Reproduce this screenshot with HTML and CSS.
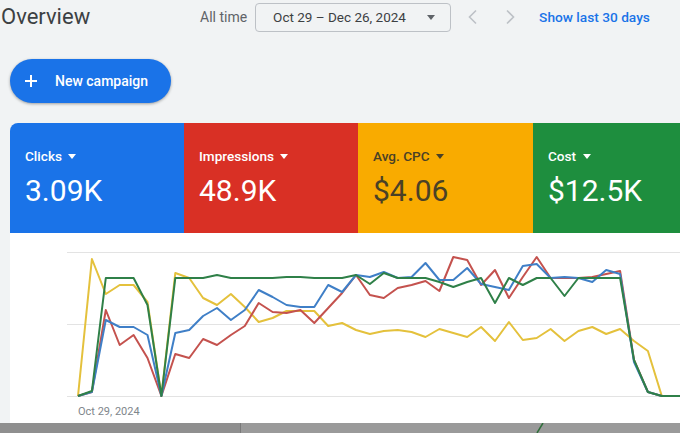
FILE: index.html
```html
<!DOCTYPE html>
<html>
<head>
<meta charset="UTF-8">
<meta name="viewport" content="width=device-width, initial-scale=1">
<link rel="stylesheet" href="styles.css">
</head>
<body>

<div class="topbar">
	<h2 class="title">Overview</h2>
	<span class="range-label">All time</span>
	<div class="date-box">
		<span>Oct 29 &ndash; Dec 26, 2024</span>
		<span class="caret"></span>
	</div>
	<button class="nav-btn" title="Previous period">
		<svg width="12" height="16" viewBox="0 0 12 16"><polyline points="9,1.5 2.5,8 9,14.5" fill="none" stroke="#bdc1c6" stroke-width="1.6"/></svg>
	</button>
	<button class="nav-btn" title="Next period">
		<svg width="12" height="16" viewBox="0 0 12 16"><polyline points="3,1.5 9.5,8 3,14.5" fill="none" stroke="#bdc1c6" stroke-width="1.6"/></svg>
	</button>
	<a class="last-days" href="#">Show last 30 days</a>
</div>

<button class="new-btn">
	<svg width="12" height="12" viewBox="0 0 12 12"><path d="M6 0v12M0 6h12" stroke="#fff" stroke-width="2"/></svg>
	<span>New campaign</span>
</button>

<div class="cards">
	<div class="card card-blue">
		<div class="card-label">Clicks <span class="caret"></span></div>
		<div class="card-value">3.09K</div>
	</div>
	<div class="card card-red">
		<div class="card-label">Impressions <span class="caret"></span></div>
		<div class="card-value">48.9K</div>
	</div>
	<div class="card card-yellow">
		<div class="card-label">Avg. CPC <span class="caret"></span></div>
		<div class="card-value">$4.06</div>
	</div>
	<div class="card card-green">
		<div class="card-label">Cost <span class="caret"></span></div>
		<div class="card-value">$12.5K</div>
	</div>
</div>

<div class="chart">
	<svg id="chartSvg" width="670" height="172"></svg>
	<div class="axis-label">Oct 29, 2024</div>
</div>

<div class="strip">
	<div class="strip-left"></div>
	<div class="strip-right">
		<svg width="20" height="10" viewBox="0 0 20 10"><line x1="2" y1="10" x2="8" y2="0" stroke="#2f6e3a" stroke-width="1.5"/></svg>
	</div>
</div>

<script>
// heights above the baseline, one value per day
var series = [
	{ color: "#e4c13c", data: [0,137,102,111,111,94,0,123,118,98,91,102,89,74,78,85,85,85,70,73,66,62,65,66,64,59,67,63,59,69,55,74,56,58,67,55,65,69,62,67,55,45,0,0] },
	{ color: "#c4524e", data: [0,4,86,51,61,38,0,42,38,57,51,61,70,93,84,83,86,73,88,103,121,101,98,108,111,115,105,139,136,111,126,98,119,139,118,118,118,119,122,125,36,4,0,0] },
	{ color: "#3f7fc7", data: [0,4,76,69,69,61,0,63,66,80,88,76,86,106,99,91,89,89,111,104,121,119,124,118,119,133,116,116,128,112,109,106,130,132,118,119,118,114,126,122,34,4,0,0] },
	{ color: "#2f8048", data: [0,5,118,118,118,91,0,118,118,118,121,118,118,118,118,119,119,118,118,118,121,112,123,118,118,118,114,109,114,118,93,118,111,118,118,100,118,118,118,118,36,4,0,0] }
];

var svg = document.getElementById("chartSvg");
var ns = "http://www.w3.org/2000/svg";
var base = 163;
var left = 68;
var step = 13.9;

// grid lines
var grid = [0, 72, 144];
for (var g = 0; g < grid.length; g++) {
	var line = document.createElementNS(ns, "line");
	line.setAttribute("x1", 57);
	line.setAttribute("x2", 670);
	line.setAttribute("y1", base - grid[g] + 0.5);
	line.setAttribute("y2", base - grid[g] + 0.5);
	line.setAttribute("stroke", "#e3e3e3");
	line.setAttribute("stroke-width", 1);
	svg.appendChild(line);
}

for (var s = 0; s < series.length; s++) {
	var pts = "";
	var d = series[s].data;
	for (var i = 0; i < d.length; i++) {
		pts += (left + step * i).toFixed(1) + "," + (base - d[i]) + " ";
	}
	pts += "672," + base;
	var poly = document.createElementNS(ns, "polyline");
	poly.setAttribute("points", pts);
	poly.setAttribute("fill", "none");
	poly.setAttribute("stroke", series[s].color);
	poly.setAttribute("stroke-width", 2);
	poly.setAttribute("stroke-linejoin", "round");
	svg.appendChild(poly);
}
</script>

</body>
</html>
```

FILE: styles.css
```css
* {
	box-sizing: border-box;
}

body {
	margin: 0;
	width: 680px;
	height: 433px;
	overflow: hidden;
	background-color: #f1f3f4;
	font-family: Roboto, "Liberation Sans", sans-serif;
	color: #3c4043;
}

.topbar {
	display: flex;
	align-items: center;
	height: 33px;
	padding-left: 1px;
}

.title {
	width: 199px;
	margin: 0;
	font-size: 22px;
	font-weight: 400;
	color: #3c4043;
}

.range-label {
	font-size: 14px;
	color: #5f6368;
	margin-right: 8px;
}

.date-box {
	display: flex;
	align-items: center;
	justify-content: space-between;
	width: 196px;
	height: 29px;
	margin-top: 1px;
	padding: 0 15px 0 17px;
	border: 1px solid #bdc1c6;
	border-radius: 4px;
	font-size: 13.5px;
	color: #3c4043;
}

.caret {
	display: inline-block;
	width: 0;
	height: 0;
	border-left: 4.5px solid transparent;
	border-right: 4.5px solid transparent;
	border-top: 5px solid currentColor;
	vertical-align: middle;
}

.date-box .caret {
	color: #5f6368;
}

.nav-btn {
	display: flex;
	align-items: center;
	justify-content: center;
	width: 24px;
	height: 24px;
	padding: 0;
	border: none;
	background: none;
}

.nav-btn:first-of-type {
	margin-left: 10px;
}

.nav-btn + .nav-btn {
	margin-left: 13px;
}

.last-days {
	margin-left: 17px;
	font-size: 13.7px;
	font-weight: 500;
	color: #1a73e8;
	text-decoration: none;
}

.new-btn {
	display: flex;
	align-items: center;
	gap: 18px;
	width: 161px;
	height: 44px;
	margin: 26px 0 0 10px;
	padding: 0 0 0 15px;
	border: none;
	border-radius: 22px;
	background-color: #1a73e8;
	box-shadow: 0 1px 3px rgba(0, 0, 0, 0.35);
	color: #ffffff;
	font-family: Roboto, "Liberation Sans", sans-serif;
	font-size: 14px;
	font-weight: 500;
}

.cards {
	display: grid;
	grid-template-columns: 174px 174px 175px 175px;
	width: 698px;
	height: 110px;
	margin: 20px 0 0 10px;
	border-radius: 8px 8px 0 0;
	overflow: hidden;
}

.card {
	padding: 25px 0 0 15px;
	color: #ffffff;
}

.card-blue {
	background-color: #1a73e8;
}

.card-red {
	background-color: #d93025;
}

.card-yellow {
	background-color: #f9ab00;
	color: #4a4126;
}

.card-green {
	background-color: #1e8e3e;
}

.card-label {
	height: 16px;
	line-height: 16px;
	font-size: 13.6px;
	font-weight: 500;
}

.card-label .caret {
	margin-left: 3px;
	margin-top: -2px;
}

.card-value {
	margin-top: 9px;
	line-height: 36px;
	font-size: 30px;
}

.chart {
	width: 680px;
	height: 190px;
	margin-left: 10px;
	background-color: #ffffff;
}

.chart svg {
	display: block;
}

.axis-label {
	padding-left: 68px;
	line-height: 14px;
	font-size: 11px;
	color: #80868b;
}

.strip {
	display: flex;
	height: 10px;
	background-color: #9a9a9a;
}

.strip-left {
	width: 241px;
	border-right: 1px solid #7a7a7a;
	background-color: #8f8f8f;
}

.strip-right {
	flex: 1;
	padding-left: 294px;
}

.strip-right svg {
	display: block;
}
```
